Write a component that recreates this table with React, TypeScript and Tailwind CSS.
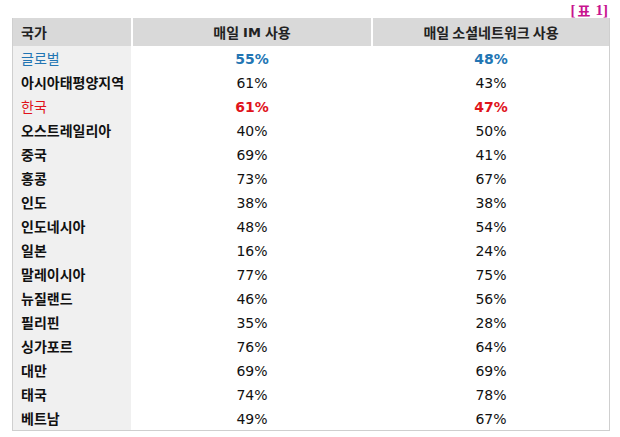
import React from "react";

interface Row {
  country: string;
  im: string;
  sns: string;
  tone?: "blue" | "red";
}

const rows: Row[] = [
  { country: "글로벌", im: "55%", sns: "48%", tone: "blue" },
  { country: "아시아태평양지역", im: "61%", sns: "43%" },
  { country: "한국", im: "61%", sns: "47%", tone: "red" },
  { country: "오스트레일리아", im: "40%", sns: "50%" },
  { country: "중국", im: "69%", sns: "41%" },
  { country: "홍콩", im: "73%", sns: "67%" },
  { country: "인도", im: "38%", sns: "38%" },
  { country: "인도네시아", im: "48%", sns: "54%" },
  { country: "일본", im: "16%", sns: "24%" },
  { country: "말레이시아", im: "77%", sns: "75%" },
  { country: "뉴질랜드", im: "46%", sns: "56%" },
  { country: "필리핀", im: "35%", sns: "28%" },
  { country: "싱가포르", im: "76%", sns: "64%" },
  { country: "대만", im: "69%", sns: "69%" },
  { country: "태국", im: "74%", sns: "78%" },
  { country: "베트남", im: "49%", sns: "67%" },
];

const kr = "font-['Noto_Sans_CJK_KR',sans-serif]";
const num = "font-['DejaVu_Sans','Noto_Sans_CJK_KR',sans-serif]";

export default function App() {
  return (
    <div className="w-[620px] h-[437px] bg-white pl-3 pr-[10px] pt-[2px]">
      <div className="flex justify-end items-center h-[16px] text-[15px] leading-[16px] font-bold text-[#c8138f] pr-[2px] font-['Liberation_Serif','Noto_Sans_CJK_KR',serif]">
        <span>[</span>
        <span className={`${kr} text-[14px] ml-[2px] mr-[5px]`}>표</span>
        <span>1]</span>
      </div>
      <div className="border-x border-b border-[#cfcfcf]">
        {/* header */}
        <div className="flex h-[28px] bg-[#d9d9d9] text-[14px] font-bold text-[#222]">
          <div className={`w-[118px] flex items-center pl-2 pt-[1px] ${kr}`}>국가</div>
          <div className={`w-[240px] flex items-center justify-center pt-[1px] border-l-2 border-white ${kr}`}>
            매일 <span className={`${num} mx-1 text-[13px]`}>IM</span> 사용
          </div>
          <div className={`flex-1 flex items-center justify-center pt-[1px] border-l-2 border-white ${kr}`}>
            매일 소셜네트워크 사용
          </div>
        </div>
        {rows.map((r) => {
          const color =
            r.tone === "blue" ? "text-[#2275b3]" : r.tone === "red" ? "text-[#e0131b]" : "text-[#111]";
          const numWeight = r.tone ? "font-bold" : "font-normal";
          return (
            <div key={r.country} className="flex h-[24px]">
              <div
                className={`w-[118px] bg-[#f0f0f0] flex items-center pl-2 pt-[1px] text-[14px] ${kr} ${color} ${
                  r.tone ? "font-normal" : "font-semibold"
                }`}
              >
                {r.country}
              </div>
              <div className={`w-[242px] flex items-center justify-center pt-[2px] text-[14px] ${num} ${color} ${numWeight}`}>
                {r.im}
              </div>
              <div className={`flex-1 flex items-center justify-center pt-[2px] text-[14px] ${num} ${color} ${numWeight}`}>
                {r.sns}
              </div>
            </div>
          );
        })}
      </div>
    </div>
  );
}
